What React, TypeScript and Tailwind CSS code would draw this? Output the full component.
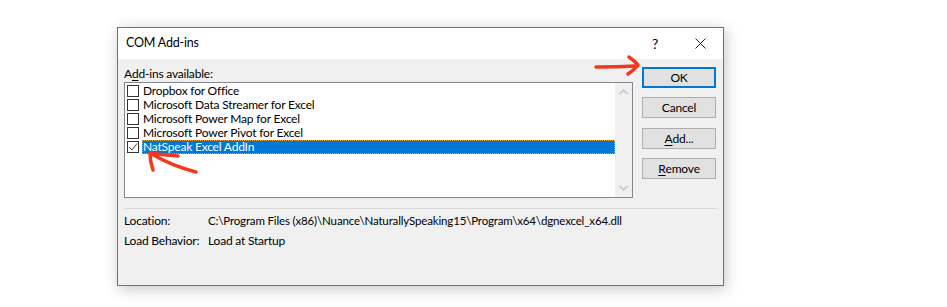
import { ReactNode } from "react";

const items = [
  { label: "Dropbox for Office", checked: false },
  { label: "Microsoft Data Streamer for Excel", checked: false },
  { label: "Microsoft Power Map for Excel", checked: false },
  { label: "Microsoft Power Pivot for Excel", checked: false },
  { label: "NatSpeak Excel AddIn", checked: true, selected: true },
];

function Btn({ children, primary = false }: { children: ReactNode; primary?: boolean }) {
  return (
    <div
      className={`h-[21px] w-[74px] flex items-center justify-center bg-[#e1e1e1] ${
        primary ? "border-2 border-[#0078d7]" : "border border-[#adadad]"
      }`}
    >
      {children}
    </div>
  );
}

function Row({ label, checked, selected }: { label: string; checked: boolean; selected?: boolean }) {
  return (
    <div className="h-[14px] flex items-center">
      <div className="ml-[2px] w-[12px] h-[12px] border border-[#333333] bg-white flex items-center justify-center shrink-0">
        {checked && (
          <svg width="10" height="10" viewBox="0 0 10 10">
            <path d="M1 5 L4 8 L9 1.5" fill="none" stroke="#444" strokeWidth="1" />
          </svg>
        )}
      </div>
      <div
        className={`ml-[3px] h-[14px] flex items-center pl-[1px] leading-none whitespace-nowrap ${
          selected ? "flex-1 bg-[#0078d7] text-white outline-1 outline-dotted outline-[#e8a040] -outline-offset-1" : ""
        }`}
      >
        {label}
      </div>
    </div>
  );
}

export default function App() {
  return (
    <div
      className="relative min-h-screen bg-white pl-[117px] pt-[27px] text-[12px] tracking-[-0.2px] text-black"
      style={{ fontFamily: 'Lato, "Noto Sans", sans-serif' }}
    >
      <div className="w-[607px] h-[259px] flex flex-col border border-[#707070] bg-[#f0f0f0] shadow-[2px_3px_14px_rgba(0,0,0,0.22)]">
        {/* title bar */}
        <div className="h-[31px] bg-white flex items-center shrink-0">
          <div className="pl-[8px] text-[12.5px] flex-1">COM Add-ins</div>
          <div className="w-[18px] text-[14px] text-center mr-[13px]">?</div>
          <div className="w-[46px] flex justify-center">
            <svg width="11" height="11" viewBox="0 0 11 11">
              <path d="M0.5 0.5 L10.5 10.5 M10.5 0.5 L0.5 10.5" stroke="#222" strokeWidth="1" />
            </svg>
          </div>
        </div>

        <div className="flex-1 px-[6px] flex flex-col">
          <div className="flex">
            <div className="w-[509px] pt-[6px] flex flex-col">
              <div className="h-[17px] flex items-center">
                A<span className="underline underline-offset-2">d</span>d-ins available:
              </div>
              <div className="h-[116px] border border-[#828790] bg-white flex">
                <div className="flex-1 pt-[1px] flex flex-col">
                  {items.map((it) => (
                    <Row key={it.label} {...it} />
                  ))}
                </div>
                <div className="w-[17px] bg-[#f0f0f0] flex flex-col items-center justify-between py-[6px]">
                  <svg width="9" height="6" viewBox="0 0 9 6">
                    <path d="M0.5 5 L4.5 1 L8.5 5" fill="none" stroke="#c2c2c2" strokeWidth="1.3" />
                  </svg>
                  <svg width="9" height="6" viewBox="0 0 9 6">
                    <path d="M0.5 1 L4.5 5 L8.5 1" fill="none" stroke="#c2c2c2" strokeWidth="1.3" />
                  </svg>
                </div>
              </div>
            </div>
            <div className="ml-[9px] pt-[8px] flex flex-col">
              <Btn primary>OK</Btn>
              <div className="mt-[9px]">
                <Btn>Cancel</Btn>
              </div>
              <div className="mt-[10px]">
                <Btn>
                  <span className="underline underline-offset-2">A</span>dd...
                </Btn>
              </div>
              <div className="mt-[9px]">
                <Btn>
                  <span className="underline underline-offset-2">R</span>emove
                </Btn>
              </div>
            </div>
          </div>

          <div className="mt-[10px] h-px bg-[#d9d9d9]" />

          <div className="mt-[4px] h-[16px] flex items-center whitespace-nowrap">
            <div className="w-[84px] shrink-0">Location:</div>
            <div className="text-[11.5px] tracking-[-0.15px]">
              C:\Program Files (x86)\Nuance\NaturallySpeaking15\Program\x64\dgnexcel_x64.dll
            </div>
          </div>
          <div className="mt-[4px] h-[16px] flex items-center whitespace-nowrap">
            <div className="w-[84px] shrink-0">Load Behavior:</div>
            <div>Load at Startup</div>
          </div>
        </div>
      </div>

      {/* red annotation arrows */}
      <svg className="absolute left-0 top-0 pointer-events-none" width="947" height="307" viewBox="0 0 947 307">
        <g fill="none" stroke="#f5381c" strokeWidth="3.5" strokeLinecap="round" strokeLinejoin="round">
          <path d="M596 67 Q617 67 637 66" />
          <path d="M629 57 Q635 61 638 65 Q634 70 628 74" />
          <path d="M150 153 Q172 166 196 172" />
          <path d="M150 153 Q164 155 178 156" />
          <path d="M150 153 Q150 162 153 170" />
        </g>
      </svg>
    </div>
  );
}
